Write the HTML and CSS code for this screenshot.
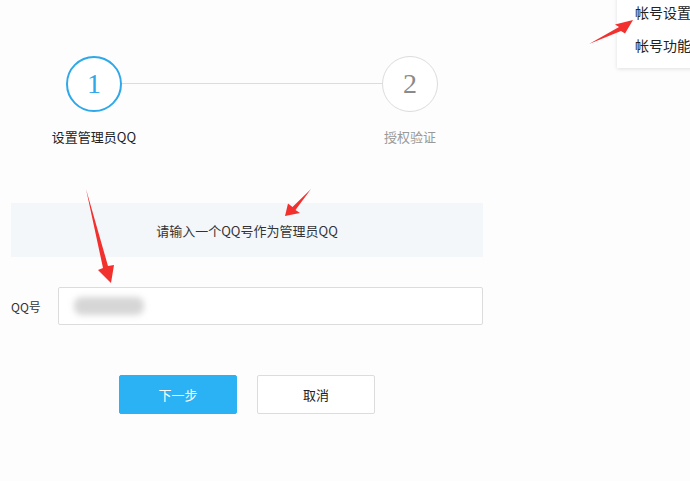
FILE: index.html
```html
<!DOCTYPE html>
<html lang="zh-CN">
<head>
    <meta charset="UTF-8">
    <title>设置管理员QQ</title>
    <link rel="stylesheet" href="styles.css">
</head>
<body>

    <div class="page">
        <!-- Kroki -->
        <div class="steps">
            <div class="step-circle active">1</div>
            <div class="step-line"></div>
            <div class="step-circle">2</div>
            <div class="step-label active"><span>设置管理员QQ</span></div>
            <div></div>
            <div class="step-label"><span>授权验证</span></div>
        </div>

        <div class="tip-box">请输入一个QQ号作为管理员QQ</div>

        <div class="form-row">
            <label class="form-label" for="qq">QQ号</label>
            <div class="input-box" id="qq">
                <span class="blurred"></span>
            </div>
        </div>

        <div class="buttons">
            <button class="btn btn-primary">下一步</button>
            <button class="btn btn-default">取消</button>
        </div>
    </div>

    <!-- Menu w prawym górnym rogu -->
    <div class="dropdown">
        <div class="dropdown-item">帐号设置</div>
        <div class="dropdown-item">帐号功能</div>
    </div>

    <!-- Czerwone strzałki -->
    <svg class="arrows" width="690" height="481">
        <polygon points="86,189 108,266 114,265 111,283 98,270 103,268" />
        <polygon points="311,189 295.5,210 300,213 285,216 288,203.5 292.5,207" />
        <polygon points="589,44 621,31 625,33.5 633,20 615,24.5 619,27" />
    </svg>

</body>
</html>
```

FILE: styles.css
```css
body {
    margin: 0;
    background-color: #fdfdfe;
    font-family: "Noto Sans CJK SC", "Noto Sans", sans-serif;
    color: #333;
    width: 690px;
    height: 481px;
    overflow: hidden;
    position: relative;
}
.page {
    padding: 56px 0 0 11px;
    width: 472px;
}
.steps {
    display: grid;
    grid-template-columns: 56px 1fr 56px;
    margin-left: 55px;
    width: 372px;
}
.step-circle {
    width: 56px;
    height: 56px;
    box-sizing: border-box;
    border: 1px solid #dcdcdc;
    border-radius: 50%;
    display: flex;
    align-items: center;
    justify-content: center;
    font-family: "Liberation Serif", serif;
    font-size: 28px;
    color: #8a8a8a;
    background-color: #fff;
}
.step-circle.active {
    border: 2px solid #2ea8e8;
    color: #2ea8e8;
}
.step-line {
    height: 1px;
    background-color: #dcdcdc;
    align-self: center;
    margin-top: -1px;
}
.step-label {
    display: flex;
    justify-content: center;
    margin-top: 15px;
    white-space: nowrap;
    font-size: 13px;
    color: #999;
}
.step-label.active {
    color: #222;
}
.tip-box {
    margin-top: 57px;
    height: 54px;
    background-color: #f3f7fa;
    display: flex;
    align-items: center;
    justify-content: center;
    font-size: 13px;
    color: #333;
}
.form-row {
    margin-top: 30px;
    display: flex;
    align-items: center;
}
.form-label {
    width: 47px;
    font-size: 12px;
    color: #333;
}
.input-box {
    flex: 1;
    height: 38px;
    box-sizing: border-box;
    border: 1px solid #dcdcdc;
    border-radius: 2px;
    background-color: #fff;
    display: flex;
    align-items: center;
    padding-left: 15px;
}
.blurred {
    width: 70px;
    height: 18px;
    background-color: #d6d6d6;
    border-radius: 8px;
    filter: blur(3px);
}
.buttons {
    margin-top: 50px;
    margin-left: 108px;
    display: flex;
    gap: 20px;
}
.btn {
    width: 118px;
    height: 39px;
    box-sizing: border-box;
    border-radius: 2px;
    font-family: "Noto Sans CJK SC", sans-serif;
    font-size: 13px;
    cursor: pointer;
}
.btn-primary {
    background-color: #2bb2f4;
    border: 1px solid #2bb2f4;
    color: #fff;
}
.btn-default {
    background-color: #fff;
    border: 1px solid #dcdcdc;
    color: #222;
}
.dropdown {
    position: absolute;
    left: 617px;
    top: -4px;
    width: 90px;
    height: 72px;
    background-color: #fff;
    box-shadow: 0 1px 4px rgba(0,0,0,0.12);
}
.dropdown-item {
    padding-left: 18px;
    height: 33px;
    line-height: 33px;
    font-size: 14px;
    color: #222;
    white-space: nowrap;
}
.arrows {
    position: absolute;
    left: 0;
    top: 0;
    pointer-events: none;
}
.arrows polygon {
    fill: #f2302e;
}
```
